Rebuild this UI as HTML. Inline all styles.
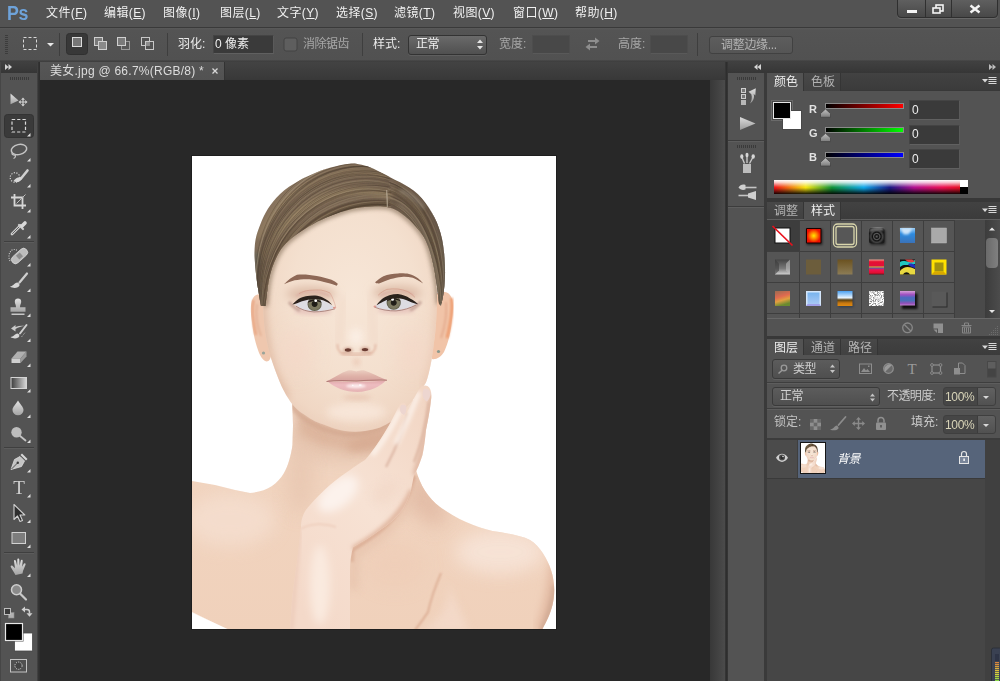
<!DOCTYPE html>
<html lang="zh-CN">
<head>
<meta charset="utf-8">
<title>美女.jpg @ 66.7%(RGB/8) * - Photoshop</title>
<style>
*{box-sizing:border-box;margin:0;padding:0}
html,body{width:1000px;height:681px;overflow:hidden;background:#535353}
body{position:relative;font-family:"Liberation Sans","Noto Sans CJK SC",sans-serif;font-size:12px;color:#e6e6e6;line-height:1}
.a{position:absolute}
.t{opacity:.99;position:absolute;white-space:nowrap;line-height:16px;height:16px;font-size:12px}
svg{position:absolute;overflow:visible}
u{text-decoration:underline;text-underline-offset:1px}
/* top bars */
#menubar{left:0;top:0;width:1000px;height:27px;background:#535353}
#menuline{left:0;top:27px;width:1000px;height:1px;background:#3a3a3a}
#optbar{left:0;top:28px;width:1000px;height:32px;background:linear-gradient(#5a5a5a,#545454 2px,#515151)}
#optline{left:0;top:60px;width:1000px;height:2px;background:linear-gradient(#4a4a4a,#3c3c3c)}
.menu{top:5px;color:#f2f2f2;letter-spacing:0.4px}
.dim{color:#a8a8a8}
.vsep{width:1px;top:33px;height:23px;background:#3e3e3e}
.inp{background:#3a3a3a;border:1px solid #444;border-bottom-color:#606060;border-right-color:#5a5a5a}
.inpd{background:#484848;border:1px solid #4d4d4d;border-bottom-color:#595959}
.dd{background:linear-gradient(#6a6a6a,#505050);border:1px solid #333;border-radius:3px;box-shadow:0 1px 0 rgba(255,255,255,.08)}
/* document */
#tabbar{left:40px;top:62px;width:685px;height:18px;background:linear-gradient(#434343,#383838)}
#canvas{left:40px;top:80px;width:670px;height:601px;background:#282828}
#vscroll{left:710px;top:80px;width:15px;height:601px;background:linear-gradient(90deg,#383838,#4b4b4b)}
#doctab{left:40px;top:62px;width:185px;height:18px;background:linear-gradient(#565656,#525252);border-right:1px solid #333}
/* left tools */
#tools{left:0;top:62px;width:38px;height:619px;background:#535353}
#toolshead{left:0;top:62px;width:38px;height:11px;background:linear-gradient(#404040,#363636)}
#toolsedge{left:37px;top:62px;width:3px;height:619px;background:linear-gradient(90deg,#474747,#333 50%,#2d2d2d)}
.tsep{left:4px;width:30px;height:1px;background:#3f3f3f;box-shadow:0 1px 0 #5c5c5c}
/* right */
#redge{left:725px;top:62px;width:3px;height:619px;background:linear-gradient(90deg,#3a3a3a,#2e2e2e 40%,#2e2e2e 70%,#3c3c3c)}
#rhead{left:728px;top:62px;width:272px;height:11px;background:linear-gradient(#404040,#363636)}
#iconcol{left:728px;top:73px;width:36px;height:608px;background:#535353}
#rgap{left:764px;top:73px;width:3px;height:608px;background:#3a3a3a}
#rpanel{left:767px;top:73px;width:233px;height:608px;background:#535353}
.ptabs{left:767px;width:233px;height:18px;background:linear-gradient(#424242,#3b3b3b);border-bottom:1px solid #383838}
.ptab{top:0;height:18px;background:linear-gradient(#484848,#414141);border-right:1px solid #353535;color:#b4b4b4}
.ptab.on{background:#535353;color:#f0f0f0;height:18px}
.ptab span{opacity:.99;position:absolute;left:2px;right:0;top:1px;text-align:center;line-height:16px;font-size:12px}
.hsep{left:767px;width:233px;height:1px;background:#3e3e3e}
</style>
</head>
<body>
<div class="a" id="menubar"></div>
<div class="a" id="menuline"></div>
<div class="a" id="optbar"></div>
<div class="a" id="optline"></div>
<div class="a" id="tabbar"></div>
<div class="a" id="canvas"></div>
<div class="a" id="vscroll"></div>
<div class="a" id="doctab"></div>
<div class="a" id="tools"></div>
<div class="a" id="toolshead"></div>
<div class="a" id="toolsedge"></div>
<div class="a" id="redge"></div>
<div class="a" id="rhead"></div>
<div class="a" id="iconcol"></div>
<div class="a" id="rgap"></div>
<div class="a" id="rpanel"></div>
<!-- ===== menu bar ===== -->
<div class="t" style="left:7px;top:3px;font-size:20px;line-height:20px;height:20px;font-weight:bold;color:#6fa4dc;letter-spacing:-0.5px;transform:scaleX(0.89);transform-origin:0 0" id="pslogo">Ps</div>
<div class="t menu" style="left:46px">文件(<u>F</u>)</div>
<div class="t menu" style="left:104px">编辑(<u>E</u>)</div>
<div class="t menu" style="left:163px">图像(<u>I</u>)</div>
<div class="t menu" style="left:220px">图层(<u>L</u>)</div>
<div class="t menu" style="left:277px">文字(<u>Y</u>)</div>
<div class="t menu" style="left:336px">选择(<u>S</u>)</div>
<div class="t menu" style="left:394px">滤镜(<u>T</u>)</div>
<div class="t menu" style="left:453px">视图(<u>V</u>)</div>
<div class="t menu" style="left:513px">窗口(<u>W</u>)</div>
<div class="t menu" style="left:575px">帮助(<u>H</u>)</div>
<!-- window buttons -->
<div class="a" style="left:897px;top:-3px;width:101px;height:21px;border:1px solid #2f2f2f;border-radius:0 0 4px 4px;background:linear-gradient(#626262,#484848);box-shadow:0 1px 0 rgba(255,255,255,.12)"></div>
<div class="a" style="left:925px;top:0;width:1px;height:17px;background:#303030"></div>
<div class="a" style="left:951px;top:0;width:1px;height:17px;background:#303030"></div>
<svg style="left:897px;top:0" width="101" height="18" viewBox="897 0 101 18">
  <rect x="907" y="10" width="10" height="3" fill="#f4f4f4"/>
  <rect x="936" y="5" width="7" height="6" fill="none" stroke="#f4f4f4" stroke-width="1.6"/>
  <rect x="933" y="8" width="7" height="5" fill="#555" stroke="#f4f4f4" stroke-width="1.6"/>
  <path d="M970.5 5.5 L979.5 12.5 M979.5 5.5 L970.5 12.5" stroke="#f4f4f4" stroke-width="2.4" fill="none"/>
</svg>
<!-- ===== options bar ===== -->
<svg style="left:0;top:28px" width="1000" height="32" viewBox="0 28 1000 32">
  <!-- grip -->
  <g fill="#3c3c3c"><rect x="5" y="35" width="3" height="1"/><rect x="5" y="37" width="3" height="1"/><rect x="5" y="39" width="3" height="1"/><rect x="5" y="41" width="3" height="1"/><rect x="5" y="43" width="3" height="1"/><rect x="5" y="45" width="3" height="1"/><rect x="5" y="47" width="3" height="1"/><rect x="5" y="49" width="3" height="1"/><rect x="5" y="51" width="3" height="1"/><rect x="5" y="53" width="3" height="1"/></g>
  <!-- marquee icon -->
  <rect x="23.5" y="37.5" width="13" height="12" fill="none" stroke="#d8d8d8" stroke-width="1" stroke-dasharray="3 2"/>
  <path d="M47 43 h7 l-3.5 3.5z" fill="#e8e8e8"/>
  <!-- selected mode button -->
  <rect x="66.5" y="33.500" width="21" height="21" rx="3" fill="#383838" stroke="#303030"/>
  <rect x="72.500" y="37.500" width="9" height="9" fill="#777" stroke="#dcdcdc"/>
  <!-- add -->
  <rect x="94.500" y="37.500" width="8" height="8" fill="#7a7a7a" stroke="#d0d0d0"/>
  <rect x="98.500" y="41.500" width="8" height="8" fill="#8a8a8a" stroke="#d0d0d0"/>
  <!-- subtract -->
  <rect x="121.500" y="41.500" width="8" height="8" fill="#585858" stroke="#9a9a9a"/>
  <rect x="117.500" y="37.500" width="8" height="8" fill="#7a7a7a" stroke="#d0d0d0"/>
  <!-- intersect -->
  <rect x="141.500" y="37.500" width="8" height="8" fill="none" stroke="#c8c8c8"/>
  <rect x="145.500" y="41.500" width="8" height="8" fill="none" stroke="#c8c8c8"/>
  <rect x="146" y="42" width="4" height="4" fill="#8c8c8c"/>
  <!-- checkbox -->
  <rect x="284" y="38" width="13" height="13" rx="2" fill="#5e5e5e" stroke="#434343"/>
  <!-- swap arrows -->
  <g fill="#8e8e8e"><path d="M588 40 h7 v-2.500 l4.500 3.500 l-4.500 3.500 v-2.500 h-7z"/><path d="M597 46 h-7 v-2.500 l-4.500 3.500 l4.500 3.500 v-2.500 h7z"/></g>
</svg>
<div class="a vsep" style="left:59px"></div>
<div class="a vsep" style="left:167px"></div>
<div class="a vsep" style="left:362px"></div>
<div class="a vsep" style="left:697px"></div>
<div class="t" style="left:178px;top:36px;color:#ededed">羽化:</div>
<div class="a inp" style="left:213px;top:35px;width:61px;height:19px"></div>
<div class="t" style="left:215px;top:36px;color:#f2f2f2">0 像素</div>
<div class="t dim" style="left:303px;top:36px;letter-spacing:-0.5px">消除锯齿</div>
<div class="t" style="left:373px;top:36px;color:#ededed">样式:</div>
<div class="a dd" style="left:408px;top:35px;width:79px;height:20px"></div>
<div class="t" style="left:416px;top:36px;color:#f2f2f2;letter-spacing:-0.5px">正常</div>
<div class="t dim" style="left:499px;top:36px">宽度:</div>
<div class="a inpd" style="left:532px;top:35px;width:38px;height:19px"></div>
<div class="t dim" style="left:618px;top:36px">高度:</div>
<div class="a inpd" style="left:650px;top:35px;width:38px;height:19px"></div>
<div class="a" style="left:709px;top:36px;width:84px;height:18px;border:1px solid #414141;border-radius:3px;background:linear-gradient(#5d5d5d,#555)"></div>
<div class="t" style="left:721px;top:37px;color:#b4b4b4;letter-spacing:-0.3px">调整边缘...</div>
<svg style="left:476px;top:38px" width="8" height="13" viewBox="476 38 8 13"><path d="M477 43 h6 l-3 -3.500z M477 46 h6 l-3 3.500z" fill="#e4e4e4"/></svg>
<!-- ===== document tab ===== -->
<div class="t" style="left:50px;top:63px;color:#dedede;letter-spacing:0.25px" id="doctitle">美女.jpg @ 66.7%(RGB/8) *</div>
<svg style="left:211px;top:67px" width="8" height="8" viewBox="0 0 8 8"><path d="M1.5 1.500 L6.500 6.500 M6.500 1.500 L1.500 6.500" stroke="#d8d8d8" stroke-width="1.300" fill="none"/></svg>
<!-- ===== left tool panel ===== -->
<div class="a tsep" style="top:241px"></div>
<div class="a tsep" style="top:447px"></div>
<div class="a tsep" style="top:552px"></div>
<svg style="left:0;top:0" width="40" height="681" viewBox="0 0 40 681">
  <defs>
    <linearGradient id="ig" x1="0" y1="0" x2="0" y2="1"><stop offset="0" stop-color="#e2e2e2"/><stop offset="1" stop-color="#a4a4a4"/></linearGradient>
    <linearGradient id="gg" x1="0" y1="0" x2="1" y2="0"><stop offset="0" stop-color="#3c3c3c"/><stop offset="1" stop-color="#d8d8d8"/></linearGradient>
    <path id="tri" d="M3.500 0 V3.500 H0z" fill="#dedede"/>
  </defs>
  <rect x="0" y="62" width="1" height="619" fill="#464646"/>
  <!-- collapse arrows -->
  <path d="M5 64 l3.500 3 l-3.500 3z M8.500 64 l3.500 3 l-3.500 3z" fill="#d4d4d4"/>
  <!-- grip -->
  <g fill="#3a3a3a"><rect x="10" y="77" width="1" height="3"/><rect x="12" y="77" width="1" height="3"/><rect x="14" y="77" width="1" height="3"/><rect x="16" y="77" width="1" height="3"/><rect x="18" y="77" width="1" height="3"/><rect x="20" y="77" width="1" height="3"/><rect x="22" y="77" width="1" height="3"/><rect x="24" y="77" width="1" height="3"/><rect x="26" y="77" width="1" height="3"/><rect x="28" y="77" width="1" height="3"/></g>
  <!-- move -->
  <path d="M10.500 93.500 V104.200 L18.500 100.500z" fill="url(#ig)"/>
  <path d="M23 97.500 l2 2.200 h-1.400 v1.700 h1.700 v-1.400 l2.200 2 l-2.200 2 v-1.400 h-1.700 v1.700 h1.400 l-2 2.200 l-2 -2.200 h1.400 v-1.700 h-1.700 v1.400 l-2.200 -2 l2.200 -2 v1.400 h1.700 v-1.700 h-1.400z" fill="#d2d2d2"/>
  <!-- marquee (selected) -->
  <rect x="4.500" y="114.500" width="29" height="23" rx="3" fill="#3a3a3a" stroke="#333"/>
  <rect x="12" y="119.500" width="13.500" height="12.500" fill="none" stroke="#dadada" stroke-width="1.200" stroke-dasharray="3.200 2"/>
  <use href="#tri" x="27" y="133"/>
  <!-- lasso -->
  <ellipse cx="19" cy="149.500" rx="7.800" ry="5" fill="none" stroke="#c4c4c4" stroke-width="1.500" transform="rotate(-12 19 149.500)"/>
  <path d="M12.500 152.500 c-1.500 1.500 1 3 2.500 2.500 c1.200 1.200 0 3 -1.500 3.500" fill="none" stroke="#c4c4c4" stroke-width="1.300"/>
  <use href="#tri" x="27" y="158"/>
  <!-- quick selection -->
  <circle cx="15" cy="177.500" r="4.800" fill="none" stroke="#d0d0d0" stroke-width="1.200" stroke-dasharray="1.200 1.400"/>
  <path d="M27.500 170.500 L21 178.500" stroke="#cfcfcf" stroke-width="2.600" stroke-linecap="round"/>
  <path d="M13.500 181 c2 -3.500 5.500 -4.500 8 -3.500 c1 2 -1.500 4.500 -4 4.500 c-1.500 0.300 -3 0 -4 -1z" fill="#d6d6d6"/>
  <use href="#tri" x="27" y="184"/>
  <!-- crop -->
  <path d="M14.500 194 V205.500 H26 M11 197.500 H22.500 V209" fill="none" stroke="#d6d6d6" stroke-width="1.800"/>
  <path d="M25.500 194.500 L16.500 203.500" stroke="#bdbdbd" stroke-width="1"/>
  <use href="#tri" x="27" y="209"/>
  <!-- eyedropper -->
  <path d="M12 234 L20.500 225.500" stroke="#d0d0d0" stroke-width="2.800" stroke-linecap="round"/>
  <path d="M12.500 233.500 L19.500 226.500" stroke="#555" stroke-width="0.900" stroke-linecap="round"/>
  <path d="M19 225 L23 229" stroke="#cdcdcd" stroke-width="2.200" stroke-linecap="round"/>
  <path d="M22 226 L25 223" stroke="#d8d8d8" stroke-width="3.600" stroke-linecap="round"/>
  <use href="#tri" x="27" y="235"/>
  <!-- healing brush -->
  <path d="M10 261 c-2 -4 -1 -9 2 -11 c2 -1 4 -0.500 5 0.500" fill="none" stroke="#d0d0d0" stroke-width="1.100" stroke-dasharray="1 1.300"/>
  <rect x="10" y="252" width="19" height="8" rx="4" fill="#bcbcbc" stroke="#dcdcdc" stroke-width="0.700" transform="rotate(-42 19.500 256)"/>
  <rect x="17" y="253.500" width="5" height="5" fill="#8c8c8c" transform="rotate(-42 19.500 256)"/>
  <use href="#tri" x="27" y="263"/>
  <!-- brush -->
  <path d="M27 273.500 L19.500 282.500" stroke="#cfcfcf" stroke-width="2.200" stroke-linecap="round"/>
  <path d="M10 286.500 c3 0 4 -3.500 7.500 -4 c1.500 0.500 2.200 1.500 2 3 c-1 2.500 -6 3.500 -9.500 1z" fill="#d6d6d6"/>
  <use href="#tri" x="27" y="288.500"/>
  <!-- stamp -->
  <path d="M18 298.500 a3.200 3.200 0 0 1 3.200 3.200 c0 2 -1.200 3 -1.200 5.500 h5.500 v4.500 h-15 v-4.500 h5.500 c0 -2.500 -1.200 -3.500 -1.200 -5.500 a3.200 3.200 0 0 1 3.200 -3.200z" fill="url(#ig)"/>
  <rect x="11.500" y="313.500" width="13" height="1.500" fill="#c8c8c8"/>
  <use href="#tri" x="27" y="313.500"/>
  <!-- history brush -->
  <path d="M26.500 325 L20 333.500" stroke="#cfcfcf" stroke-width="2" stroke-linecap="round"/>
  <path d="M10.500 337 c3 0 4 -3 7 -3.500 c1.500 0.500 2 1.500 1.800 2.800 c-1 2.300 -5.500 3 -8.800 0.700z" fill="#d6d6d6"/>
  <path d="M11 328.500 l4.500 -3.500 v2 c3 -1 6 -1.500 9 -1 c-3 0.300 -6 1.200 -9 3 v2.500z" fill="#cacaca"/>
  <path d="M21.500 337 l4 -5" stroke="#bcbcbc" stroke-width="1" stroke-dasharray="1 1.200"/>
  <use href="#tri" x="27" y="338.500"/>
  <!-- eraser -->
  <path d="M11.500 358.500 L17.500 351.500 H26.500 L20.500 358.500z" fill="#b0b0b0"/>
  <path d="M11.500 358.500 H20.500 V363 H11.500z" fill="#cfcfcf"/>
  <path d="M20.500 358.500 L26.500 351.500 V356.500 L20.500 363z" fill="#999"/>
  <use href="#tri" x="27" y="363.500"/>
  <!-- gradient -->
  <rect x="11" y="377.500" width="15.500" height="11" fill="url(#gg)" stroke="#d4d4d4" stroke-width="1"/>
  <use href="#tri" x="27" y="389"/>
  <!-- blur drop -->
  <path d="M18 400.500 c2 3.500 5.500 6.500 5.500 9.500 a5.500 5.300 0 0 1 -11 0 c0 -3 3.500 -6 5.500 -9.500z" fill="url(#ig)"/>
  <use href="#tri" x="27" y="414.500"/>
  <!-- dodge -->
  <path d="M19.500 435.500 L25.500 440.500" stroke="#c4c4c4" stroke-width="1.800" stroke-linecap="round"/>
  <circle cx="16.500" cy="432.200" r="5.200" fill="#bdbdbd"/>
  <use href="#tri" x="27" y="439.500"/>
  <!-- pen -->
  <path d="M11 469.500 L14.500 459.500 L20 456.500 L24.500 461 L21.500 466.500z" fill="#c4c4c4" stroke="#dedede" stroke-width="0.800"/>
  <path d="M11.500 469 L17.500 463" stroke="#444" stroke-width="0.900"/>
  <circle cx="17.800" cy="462.700" r="1.200" fill="#3c3c3c"/>
  <path d="M20.500 455 L26 460.500 L27.500 459 L22 453.500z" fill="#d8d8d8"/>
  <use href="#tri" x="27" y="469"/>
  <use href="#tri" x="27" y="494"/>
  <!-- rectangle shape -->
  <rect x="12" y="532.500" width="13.500" height="11" fill="#7d7d7d" stroke="#d2d2d2" stroke-width="1"/>
  <use href="#tri" x="27" y="544.500"/>
  <!-- path select -->
  <path d="M14 504.500 V519.500 L17.500 516 L20 521.500 L22.500 520.500 L20 515 H24.800z" fill="#2e2e2e" stroke="#d0d0d0" stroke-width="1.100" stroke-linejoin="round"/>
  <use href="#tri" x="27" y="519.500"/>
  <!-- hand -->
  <path d="M15.500 575 L11 567.500 c-1 -1.500 0.500 -2.500 1.700 -1.500 l2.300 2.200 l-1 -7 c-0.200 -1.500 1.500 -1.800 1.900 -0.400 l1.300 5 l0.100 -6.200 c0 -1.500 1.900 -1.500 2 0 l0.300 6.200 l1.200 -5.200 c0.300 -1.400 2 -1 1.900 0.400 l-0.600 5.800 l1.700 -3 c0.700 -1.200 2.200 -0.400 1.700 0.900 l-2.500 6.300 l-0.500 2.500z" fill="url(#ig)"/>
  <use href="#tri" x="27" y="573.500"/>
  <!-- zoom -->
  <path d="M20 593.500 L26 599.500" stroke="#c8c8c8" stroke-width="2.200" stroke-linecap="round"/>
  <circle cx="16.500" cy="589.700" r="5" fill="#8a8a8a" stroke="#cdcdcd" stroke-width="1.500"/>
  <!-- default colors / swap -->
  <rect x="8.500" y="612.500" width="5.500" height="5.500" fill="#b0b0b0" stroke="#8c8c8c" stroke-width="0.600"/>
  <rect x="4.500" y="608.500" width="6" height="6" fill="#3a3a3a" stroke="#bdbdbd" stroke-width="1"/>
  <path d="M24.500 609.500 h2.500 a2.500 2.500 0 0 1 2.500 2.500 v1.500" fill="none" stroke="#cfcfcf" stroke-width="1.500"/>
  <path d="M21.500 609.500 l3.500 -3 v6z M29.500 616.800 l-3 -3.500 h6z" fill="#cfcfcf"/>
  <!-- fg / bg -->
  <rect x="14.500" y="633" width="18" height="18" fill="#fff" stroke="#4a4a4a" stroke-width="0.800"/>
  <rect x="4.500" y="622.500" width="19" height="19" fill="#4a4a4a"/>
  <rect x="5.500" y="623.500" width="17" height="17" fill="#000" stroke="#e8e8e8" stroke-width="1.200"/>
  <!-- quick mask -->
  <rect x="10.500" y="659.500" width="16" height="12.500" fill="#505050" stroke="#c4c4c4" stroke-width="1"/>
  <circle cx="18.500" cy="665.700" r="3.600" fill="#444" stroke="#d6d6d6" stroke-width="1" stroke-dasharray="1.200 1.100"/>
</svg>
<div class="t" style="left:12px;top:478px;width:14px;text-align:center;font-family:'Liberation Serif',serif;font-size:19px;line-height:19px;height:19px;color:#d2d2d2">T</div>
<!-- ===== document canvas: portrait photo ===== -->
<div class="a" style="left:191px;top:155px;width:366px;height:475px;background:#1e1e1e"></div>
<svg style="left:192px;top:156px;overflow:hidden" width="364" height="473" viewBox="192 156 364 473" id="photo">
  <defs>
    <filter id="f05" x="-30%" y="-30%" width="160%" height="160%"><feGaussianBlur stdDeviation="0.500"/></filter>
    <filter id="f07" x="-10%" y="-10%" width="120%" height="120%"><feGaussianBlur stdDeviation="0.700"/></filter>
    <filter id="f1" x="-30%" y="-30%" width="160%" height="160%"><feGaussianBlur stdDeviation="1"/></filter>
    <filter id="f2" x="-30%" y="-30%" width="160%" height="160%"><feGaussianBlur stdDeviation="2.200"/></filter>
    <filter id="f4" x="-40%" y="-40%" width="180%" height="180%"><feGaussianBlur stdDeviation="4.500"/></filter>
    <filter id="f8" x="-50%" y="-50%" width="200%" height="200%"><feGaussianBlur stdDeviation="9"/></filter>
    <linearGradient id="bodyg" x1="0" y1="0" x2="0" y2="1"><stop offset="0" stop-color="#f3dccb"/><stop offset="0.350" stop-color="#f1d4bf"/><stop offset="1" stop-color="#f0d1bb"/></linearGradient>
    <radialGradient id="faceg" cx="0.520" cy="0.400" r="0.650"><stop offset="0" stop-color="#f7e6d7"/><stop offset="0.550" stop-color="#f4e0cf"/><stop offset="0.850" stop-color="#f0d7c4"/><stop offset="1" stop-color="#eaccb8"/></radialGradient>
    <linearGradient id="hairg" x1="0.150" y1="0.100" x2="0.900" y2="0.800"><stop offset="0" stop-color="#8c7761"/><stop offset="0.350" stop-color="#7a6754"/><stop offset="0.650" stop-color="#6a5848"/><stop offset="1" stop-color="#756859"/></linearGradient>
    <linearGradient id="handg" x1="0.900" y1="0" x2="0.200" y2="1"><stop offset="0" stop-color="#f2d6c4"/><stop offset="0.500" stop-color="#f7e2d4"/><stop offset="1" stop-color="#f4d9c9"/></linearGradient>
    <radialGradient id="irisg"><stop offset="0" stop-color="#1c1a16"/><stop offset="0.360" stop-color="#24211a"/><stop offset="0.480" stop-color="#7e7a60"/><stop offset="0.800" stop-color="#7a7760"/><stop offset="1" stop-color="#55533f"/></radialGradient>
    <linearGradient id="lipU" x1="0" y1="0" x2="0" y2="1"><stop offset="0" stop-color="#ebcdc0"/><stop offset="0.500" stop-color="#dfb2a8"/><stop offset="1" stop-color="#d4a09c"/></linearGradient>
    <linearGradient id="lipL" x1="0" y1="0" x2="0" y2="1"><stop offset="0" stop-color="#dfa6a8"/><stop offset="0.400" stop-color="#edbcc0"/><stop offset="1" stop-color="#e6b4b4"/></linearGradient>
    <clipPath id="cbody"><path id="pbody" d="M192 481 L215 485 L235 490 L250 493 C258 492.500 266 490 272 486 C277 482.500 281 478 284 473 C288 466 291 456 292.500 445 L293 425 L292 400 L430 400 L416 470 C420 485 428 498 440 507 C455 518 475 527 492.500 531 C505 533 520 535 530 540 C540 546 548 560 551 570 C555 582 555 595 552.500 605 C550 615 546 622 542.500 629 L227.500 629 L192 612.500 Z"/></clipPath>
    <clipPath id="cface"><path id="pface" d="M265 290 C263 300 263 310 263.750 317.500 C264 328 266 338 268 347 C270 356 275 370 280 382.500 C284 392 288 398 291 402.500 C296 409 300 412 305 415 C312 420 318 423 325 425 C332 428 338 430 345 431 C352 432 358 432 365 431 C370 430 376 429 380 427.500 C388 424 394 420 400 414 C410 404 420 392 426 382.500 C430 372 433 352 434 342.500 C436 330 437 310 437 295 C437 270 430 230 400 205 L330 205 C290 225 268 260 265 290 Z"/></clipPath>
    <clipPath id="chair"><path id="phair" d="M261 306 C260.5 303.1 258.9 294.4 258 288.6 C257.1 282.8 256.3 276.6 255.7 271.2 C255.2 265.8 254.8 260.5 254.6 256.2 C254.5 252 254.5 248.7 254.8 245.7 C255 242.6 255.4 240.4 255.9 237.9 C256.4 235.4 257.2 233.1 258 230.7 C258.8 228.3 259.7 225.8 260.7 223.4 C261.6 220.9 262.7 218.5 263.9 216 C265.1 213.6 266.3 211.1 267.9 208.7 C269.4 206.3 271.1 203.8 273.2 201.4 C275.2 198.9 277.5 196.5 280.1 194 C282.8 191.6 285.7 189.2 289 186.8 C292.4 184.5 296.1 182.1 300.2 179.9 C304.2 177.7 308.9 175.6 313.5 173.7 C318 171.8 323.1 170 327.5 168.6 C332 167.1 336.3 166 339.9 165.2 C343.6 164.4 346.6 163.9 349.5 163.7 C352.4 163.5 354.7 163.6 357.5 163.9 C360.3 164.3 363.1 165 366.2 166 C369.2 167 372.7 168.4 375.9 169.9 C379.2 171.4 382.5 173.3 385.8 175 C389 176.6 392.1 178.3 395.3 180 C398.5 181.6 401.8 183.1 404.9 184.9 C408 186.7 411.1 188.5 413.9 190.7 C416.7 192.9 419.3 195.4 421.8 198.2 C424.3 201 426.6 204.2 428.7 207.5 C430.8 210.7 432.8 214.1 434.5 217.5 C436.2 220.9 437.6 224.3 438.9 227.9 C440.1 231.4 441.1 235 442 238.9 C442.8 242.7 443.4 246.9 443.9 251.2 C444.4 255.6 444.8 260.4 444.9 265.1 C445.1 269.8 445.1 274.8 444.9 279.5 C444.7 284.2 444.1 288.8 443.5 293.2 C442.9 297.6 441.4 303.9 441 306 L439 304 C438.6 300.9 437.7 291.5 436.9 285.5 C436 279.5 435.1 273.3 434 267.8 C432.9 262.2 431.5 256.6 430.2 252.2 C428.9 247.9 427.6 244.5 426.2 241.4 C424.8 238.3 423.4 236.2 421.6 233.7 C419.8 231.2 417.8 228.8 415.7 226.4 C413.5 224 411.1 221.5 408.7 219.3 C406.3 217.2 403.8 215.1 401.4 213.4 C399 211.7 396.6 210.3 394.2 209.2 C391.8 208.1 389.8 207.4 387 206.9 C384.3 206.4 381.4 206.2 377.7 206.2 C374 206.2 369 206.4 364.7 206.9 C360.4 207.3 355.8 208 351.9 208.9 C347.9 209.8 344.9 210.7 340.9 212 C336.9 213.3 332.5 214.9 328 216.8 C323.6 218.7 318.5 221.1 314.1 223.4 C309.8 225.7 305.8 228.3 302 230.8 C298.3 233.2 294.9 235.5 291.8 238 C288.6 240.6 285.8 243.1 283.3 246.2 C280.8 249.2 278.7 252.7 276.8 256.4 C274.9 260 273.3 264.1 272 268 C270.7 271.9 269.7 275.9 268.9 280 C268 284.1 267.6 288.2 267 292.5 C266.4 296.8 265.8 303.8 265.5 306 Z"/></clipPath>
    <clipPath id="chand"><path id="phand" d="M427.500 386 C431 388 432 394 431 400 C430 410 428 420 426 430 C425 440 424 448 422.500 455 C420 463 417 470 414 475 C413 480 412 485 411 490 C409 497 406 504 402.500 510 C396 518 388 525 380 530 C372 536 362 542 353 547 C351 555 350 562 350 570 L350 629 L290 629 L292.500 595 L297.500 557.500 L301 527.500 C301 518 304 511 310 505 C316 498 323 491 330 485 C337 479 344 474 350 470 C355 466 360 463 365 460 C372 452 379 442 385 432 C390 424 395 414 399 406 C401 402 405 402 406 405 C407 408 406 412 405 416 C409 408 414 398 418 391 C421 386 424 384.500 427.500 386 Z"/></clipPath>
    <g id="portrait">
      <rect x="192" y="156" width="364" height="473" fill="#fff"/>
      <!-- body -->
      <use href="#pbody" fill="url(#bodyg)"/>
      <g clip-path="url(#cbody)">
        <ellipse cx="345" cy="436" rx="58" ry="26" fill="#e4c2ac" filter="url(#f8)" opacity="0.900"/><path d="M296 410 C310 428 335 438 360 438 C378 437 392 430 402 420 L398 445 C380 452 330 452 300 436Z" fill="#dbb29a" filter="url(#f4)" opacity="0.850"/><path d="M291 404 C300 418 318 430 345 434 C362 435 380 431 398 418" stroke="#d3a78f" stroke-width="6" fill="none" filter="url(#f2)" opacity="0.900"/>
        <ellipse cx="300" cy="475" rx="14" ry="40" fill="#e6c4ae" filter="url(#f8)" opacity="0.700"/>
        <ellipse cx="425" cy="500" rx="16" ry="30" fill="#e0b8a2" filter="url(#f8)" opacity="0.800" transform="rotate(-35 425 500)"/><ellipse cx="372" cy="440" rx="26" ry="9" fill="#d6a990" filter="url(#f4)" opacity="0.700" transform="rotate(-20 372 440)"/>
        <ellipse cx="500" cy="552" rx="45" ry="22" fill="#f7e4d8" filter="url(#f8)" opacity="0.900"/>
        <ellipse cx="230" cy="520" rx="45" ry="26" fill="#f5dfd0" filter="url(#f8)" opacity="0.800"/>
        <path d="M556 560 C552 590 548 610 540 632" stroke="#e2b9a2" stroke-width="10" fill="none" filter="url(#f4)"/><path d="M555 585 C553 602 549 616 542 631" stroke="#cfa892" stroke-width="5" fill="none" filter="url(#f2)"/>
        <path d="M441 573 C436 585 431 598 428 612 C424 618 420 624 415 630" stroke="#d9a98f" stroke-width="1.600" fill="none" filter="url(#f1)"/>
        <path d="M445 578 C455 600 440 620 420 632 L470 632 Z" fill="#f4dccd" filter="url(#f4)" opacity="0.700"/>
        <ellipse cx="395" cy="565" rx="30" ry="22" fill="#eecbb5" filter="url(#f8)" opacity="0.500"/>
        <path d="M192 612 L228 630 L192 640Z" fill="#fff"/>
      </g>
      <!-- ears -->
      <path d="M266 296 C262 293 256 293 253 298 C250 304 250.500 312 252 322 C253 332 255 342 258 350 C260 356 263 360.500 266.500 361.500 C269.500 361.500 271 358 271.500 353 L272 340 Z" fill="#efc7ae"/><path d="M257 304 C255.500 314 257 326 261 336" stroke="#e2ac90" stroke-width="1.500" fill="none" filter="url(#f1)"/>
      <path d="M253.500 300 C251.500 310 253 322 256 335" stroke="#e8a27e" stroke-width="2.200" fill="none" filter="url(#f1)"/>
      <path d="M436 294 C440 291 447 291 450 295 C454 300 453.500 310 452 320 C451 332 448 344 444 352 C441 357 436 360 432 359 L430 330 Z" fill="#f1c4a8"/><path d="M446 302 C447 312 445 326 441 338" stroke="#e2a688" stroke-width="1.500" fill="none" filter="url(#f1)"/>
      <path d="M451.500 298 C453 308 451 322 447 338" stroke="#ee9a6c" stroke-width="2.600" fill="none" filter="url(#f1)"/>
      <circle cx="263.500" cy="353" r="1.600" fill="#9aa49a"/><circle cx="438.500" cy="351.500" r="1.600" fill="#8a988c"/>
      <!-- face -->
      <use href="#pface" fill="url(#faceg)"/>
      <g clip-path="url(#cface)">
        <path d="M261 290 C261 330 268 368 286 398" stroke="#dfb8a0" stroke-width="8" fill="none" filter="url(#f4)"/><path d="M288 402 C300 420 330 434 358 435 C375 434 390 428 400 418" stroke="#ecd0bd" stroke-width="3" fill="none" filter="url(#f2)"/>
        <path d="M439 290 C439 330 435 360 425 388" stroke="#e9c6b0" stroke-width="6" fill="none" filter="url(#f4)"/>
        <ellipse cx="297" cy="352" rx="18" ry="24" fill="#f4d8c8" filter="url(#f8)" opacity="0.700"/>
        <ellipse cx="412" cy="352" rx="16" ry="24" fill="#f4d8c8" filter="url(#f8)" opacity="0.700"/>
        <ellipse cx="356" cy="412" rx="30" ry="9" fill="#f9e9dd" filter="url(#f4)" opacity="0.800"/>
        <!-- eye shadows -->
        <ellipse cx="311" cy="294" rx="25" ry="8" fill="#dfbfab" filter="url(#f4)"/>
        <ellipse cx="397" cy="293" rx="25" ry="8" fill="#dfbfab" filter="url(#f4)"/>
        <path d="M296 296 C304 290.500 318 290 330 296" stroke="#d9a9a0" stroke-width="1.200" fill="none" filter="url(#f1)"/>
        <path d="M380 296 C390 290 404 289.500 414 295" stroke="#d9a9a0" stroke-width="1.200" fill="none" filter="url(#f1)"/>
        <ellipse cx="313" cy="311" rx="19" ry="3.500" fill="#e6c4bc" filter="url(#f2)"/>
        <ellipse cx="396" cy="310" rx="19" ry="3.500" fill="#e6c4bc" filter="url(#f2)"/>
        <!-- nose -->
        <path d="M343 296 C341 318 340 332 337.500 345" stroke="#f0d8c7" stroke-width="5" fill="none" filter="url(#f4)"/>
        <path d="M370 296 C372 318 373 332 375.500 345" stroke="#f0d8c7" stroke-width="5" fill="none" filter="url(#f4)"/>
        <ellipse cx="356" cy="337" rx="7" ry="9" fill="#fcf1e8" filter="url(#f4)" opacity="0.900"/>
        <path d="M337.500 344 C337 350 340 353.500 345 353.500" stroke="#e2b8a4" stroke-width="1.800" fill="none" filter="url(#f1)"/>
        <path d="M375.500 344 C376 350 373 353.500 368 353.500" stroke="#e2b8a4" stroke-width="1.800" fill="none" filter="url(#f1)"/>
        <path d="M342 353 C348 355.500 364 355.500 371 353" stroke="#dcae9a" stroke-width="3" fill="none" filter="url(#f2)"/>
        <ellipse cx="348" cy="350" rx="5" ry="3" fill="#c99a88" filter="url(#f1)" opacity="0.600"/><ellipse cx="348" cy="350" rx="3.200" ry="1.700" fill="#6a3c32" filter="url(#f07)"/>
        <ellipse cx="365" cy="349.600" rx="5" ry="3" fill="#c99a88" filter="url(#f1)" opacity="0.600"/><ellipse cx="365" cy="349.600" rx="3.200" ry="1.700" fill="#6a3c32" filter="url(#f07)"/>
        <ellipse cx="356.500" cy="362" rx="4" ry="4" fill="#ecccb9" filter="url(#f2)" opacity="0.800"/>
        <!-- lips -->
        <g filter="url(#f05)">
        <path d="M326.500 381.300 C334 378 341 372.500 348 370.500 C351 370 354 371 356.300 371.500 C358.500 371 361.500 370 364.500 370.500 C371 372.500 380 377.500 387 380 C375 381.500 340 382 326.500 381.300Z" fill="url(#lipU)"/>
        <path d="M327.500 381.300 C340 382.500 375 382 386 380.200 C381 386 370 391.500 357.500 392 C345 392 334 387.500 327.500 381.300Z" fill="url(#lipL)"/>
        </g>
        <path d="M326.500 381.500 C333 380.500 345 380.300 356.500 381 C368 380.200 380 379.600 387 380.200" stroke="#b07874" stroke-width="1.100" fill="none" filter="url(#f05)"/>
        <ellipse cx="356" cy="386" rx="10" ry="2.200" fill="#fbe9ea" filter="url(#f1)"/>
        <rect x="359" y="384.500" width="2.500" height="1.200" fill="#fff"/><rect x="352" y="384.800" width="1.500" height="1" fill="#fff"/>
        <ellipse cx="357" cy="397.500" rx="14" ry="3" fill="#e9c7b4" filter="url(#f2)" opacity="0.800"/>
      </g>
      <g clip-path="url(#cface)"><path d="M439 304 C438.6 300.9 437.7 291.5 436.9 285.5 C436 279.5 435.1 273.3 434 267.8 C432.9 262.2 431.5 256.6 430.2 252.2 C428.9 247.9 427.6 244.5 426.2 241.4 C424.8 238.3 423.4 236.2 421.6 233.7 C419.8 231.2 417.8 228.8 415.7 226.4 C413.5 224 411.1 221.5 408.7 219.3 C406.3 217.2 403.8 215.1 401.4 213.4 C399 211.7 396.6 210.3 394.2 209.2 C391.8 208.1 389.8 207.4 387 206.9 C384.3 206.4 381.4 206.2 377.7 206.2 C374 206.2 369 206.4 364.7 206.9 C360.4 207.3 355.8 208 351.9 208.9 C347.9 209.8 344.9 210.7 340.9 212 C336.9 213.3 332.5 214.9 328 216.8 C323.6 218.7 318.5 221.1 314.1 223.4 C309.8 225.7 305.8 228.3 302 230.8 C298.3 233.2 294.9 235.5 291.8 238 C288.6 240.6 285.8 243.1 283.3 246.2 C280.8 249.2 278.7 252.7 276.8 256.4 C274.9 260 273.3 264.1 272 268 C270.7 271.9 269.7 275.9 268.9 280 C268 284.1 267.6 288.2 267 292.5 C266.4 296.8 265.8 303.8 265.5 306" stroke="#8a7660" stroke-width="5" fill="none" filter="url(#f2)" opacity="0.750"/></g>
      <!-- brows -->
      <g filter="url(#f07)">
      <path d="M284 284.200 C288 280 292.500 276.600 297 274.800 C303 274 310 274.800 316.800 276 C322 277 327 278.300 331.500 279.800 C334 281 336 282.300 337.600 283.600 C337.800 284.500 337.300 285.300 336.600 285.800 C332 284 328 282.800 324 282 C319 280.600 314 279.600 309.400 279.200 C304 279 299 279.400 294.700 280.300 C291 281.300 287.500 282.800 284 284.200Z" fill="#8e6856"/>
      <path d="M375 282.300 C377.500 280 380.500 277.800 383.400 276.200 C388 274.300 393 273.600 398 273.400 C402 273.200 406 273.400 409 273.900 C412.500 274.800 415.500 276.300 418 278.300 C420 280 421.700 281.700 423.200 283.600 C420 281.500 416.500 279.300 412.800 277.800 C409 276.900 405.500 276.700 401.800 276.900 C398 277.300 394 278.100 390.700 279.100 C387 280.300 383.500 281.800 379.700 283.300 C378 283.800 376 283.300 375 282.300Z" fill="#8e6856"/>
      </g>
      <!-- eyes -->
      <g id="eyeL">
        <path d="M289 302 C292 306 296 309 300 310.500" stroke="#b8948a" stroke-width="3" fill="none" filter="url(#f1)" opacity="0.700"/>
        <path d="M295 304.500 C300 300 306 297.800 313 297.800 C321 298.300 328 302 335 308 C328 310.300 320 311.600 313 311.400 C305 310.800 299 308.300 295 304.500Z" fill="#dddce2" filter="url(#f05)"/>
        <circle cx="314.600" cy="304" r="7.100" fill="url(#irisg)"/>
        <path d="M307.500 303 C309 298 320 298 321.700 303 C318 300.500 311 300.500 307.500 303Z" fill="#241c18" filter="url(#f05)"/>
        <circle cx="315.700" cy="300.700" r="1.400" fill="#fff"/>
        <path d="M292.300 304.500 C294 302.500 296 300.700 298.400 298.900 C301 297.400 303.500 296.600 305.700 296.200 C309 295.600 312 295.400 315.300 295.500 C318 295.800 320.500 296.500 322.600 297.400 C324.500 298.300 326.300 299.300 327.800 300.400 C329.500 301.800 331 303.300 332 305 C329 303 326 301.300 323 300.200 C320 299.400 317 299.100 314 299.100 C310 299.300 306 300 302 301.200 C298.500 302.500 295.500 304 292.300 304.500Z" fill="#2b211e" filter="url(#f05)"/>
        <path d="M299 293.700 C302 291.800 305.500 290.700 309.400 290.300 C313.500 290 317.500 289.900 321.200 290.100 C324.500 290.700 327.500 291.700 330 293" stroke="#d39a88" stroke-width="0.800" fill="none" filter="url(#f05)" opacity="0.850"/>
        <path d="M330 293 C332 296 334.500 302 335.800 307.500" stroke="#d8a090" stroke-width="0.800" fill="none" filter="url(#f05)" opacity="0.700"/>
        <path d="M296 306.200 C301 309.600 307 311.600 314 311.900 C321 311.900 328 310.800 335 308.800" stroke="#a8827c" stroke-width="0.900" fill="none" filter="url(#f05)"/>
        <ellipse cx="334.400" cy="307.700" rx="1.500" ry="1" fill="#dc9a90" filter="url(#f05)"/>
      </g>
      <g id="eyeR">
        <path d="M421 301.500 C418 305.500 414 308.500 410 310" stroke="#b8948a" stroke-width="3" fill="none" filter="url(#f1)" opacity="0.700"/>
        <path d="M374.500 306.800 C381 301.500 388 297.300 396 296.800 C404 297 411 299.500 416.500 304 C411 307.300 404 309.800 396 310.300 C388 310.500 381 309.200 374.500 306.800Z" fill="#dddce2" filter="url(#f05)"/>
        <circle cx="393.700" cy="302.700" r="7.100" fill="url(#irisg)"/>
        <path d="M386.600 301.500 C388 296.800 399 296.800 400.800 301.500 C397 299.200 390 299.200 386.600 301.500Z" fill="#241c18" filter="url(#f05)"/>
        <circle cx="392.600" cy="299.400" r="1.400" fill="#fff"/>
        <path d="M376.500 305.200 C378 302.800 380 300.700 382 298.900 C384.500 297.200 387 296 389.300 295.200 C392 294.400 395 294 398 294 C400.500 294.300 403 295 405.400 296 C408 297.100 410 298.300 412 299.600 C414.500 301.200 416.500 302.700 418.200 304.200 C415 303.800 412 302.500 409 301.300 C405 299.500 401 298.300 397 298 C392 298.200 387 299.700 383 301.800 C380.500 303 378.500 304.300 376.500 305.200Z" fill="#2b211e" filter="url(#f05)"/>
        <path d="M378.200 295.200 C381 292.500 384 290.500 387 289.400 C390.500 288.800 394 288.700 398 289 C401.500 289.500 404.500 290.300 407.600 291.500 C410.500 293 413 295 415 297.400" stroke="#d39a88" stroke-width="0.800" fill="none" filter="url(#f05)" opacity="0.850"/>
        <path d="M374.500 307.200 C381 309.700 389 311.100 396 310.900 C403 310.400 410 308.200 416.500 304.800" stroke="#a8827c" stroke-width="0.900" fill="none" filter="url(#f05)"/>
        <ellipse cx="375" cy="306.600" rx="1.500" ry="1" fill="#dc9a90" filter="url(#f05)"/>
      </g>
      <!-- hair -->
      <g filter="url(#f07)">
      <use href="#phair" fill="url(#hairg)"/>
      <g clip-path="url(#chair)">
        <path d="M390 205 C350 200 300 218 277 255 C270 270 266 290 264 306" stroke="#6a5640" stroke-width="5" fill="none" filter="url(#f2)" opacity="0.850"/>
        <path d="M392 196 C340 180 285 205 262 260" stroke="#a38d6b" stroke-width="7" fill="none" filter="url(#f2)" opacity="0.700"/>
        <path d="M386 176 C340 163 285 183 258 238" stroke="#9a8464" stroke-width="5" fill="none" filter="url(#f2)" opacity="0.700"/>
        <path d="M395 188 C420 200 440 240 443 300" stroke="#685642" stroke-width="8" fill="none" filter="url(#f2)" opacity="0.850"/>
        <path d="M398 205 C420 220 435 255 439 300" stroke="#94846e" stroke-width="4" fill="none" filter="url(#f2)" opacity="0.800"/>
        <path d="M257 252 C255.500 275 258 295 262 308" stroke="#6b665a" stroke-width="7" fill="none" filter="url(#f2)" opacity="0.900"/>
        <path d="M446 262 C446 280 445 292 442 306" stroke="#77736a" stroke-width="5" fill="none" filter="url(#f2)" opacity="0.800"/>
        <g fill="none">
<path d="M389 166.8 C326.3 141.5 240.9 195 257.6 306.6" stroke="#4a3c2e" stroke-width="1" opacity="0.33"/>
<path d="M388.7 167.5 C329.2 143.3 242.5 196 258.1 306.6" stroke="#5e4e3e" stroke-width="0.6" opacity="0.55"/>
<path d="M388.9 166.7 C327.4 144.7 241.9 198.1 258.4 307.6" stroke="#b4a48a" stroke-width="1.2" opacity="0.45"/>
<path d="M390 169 C329.1 145.3 245.2 198.5 257.5 307" stroke="#5e4e3e" stroke-width="0.7" opacity="0.36"/>
<path d="M389.5 169.5 C328.7 145.2 244.7 198.6 257.9 309.3" stroke="#4a3c2e" stroke-width="0.6" opacity="0.48"/>
<path d="M390.2 171.8 C328.1 148.6 245.9 200.8 258.5 309" stroke="#4a3c2e" stroke-width="1" opacity="0.48"/>
<path d="M390.6 171.3 C330.2 149.4 245.2 200.4 259.2 306.6" stroke="#645444" stroke-width="0.9" opacity="0.46"/>
<path d="M389.2 171.4 C329.7 149.9 248.3 201.9 257.9 307.7" stroke="#4a3c2e" stroke-width="1.4" opacity="0.54"/>
<path d="M389.3 172.8 C328.9 153 249.5 201.9 258.2 307.2" stroke="#5e4e3e" stroke-width="0.6" opacity="0.54"/>
<path d="M389.3 172.3 C329.5 152.6 247.8 202.1 260.3 309.4" stroke="#96846c" stroke-width="1.2" opacity="0.27"/>
<path d="M390.8 175.8 C330.6 154 249.4 203.3 260 306.7" stroke="#5e4e3e" stroke-width="1.5" opacity="0.40"/>
<path d="M390.3 173.7 C330 154.7 251.2 205 258.3 307.1" stroke="#5e4e3e" stroke-width="0.7" opacity="0.34"/>
<path d="M389.6 174.7 C331.1 157.6 250.8 205.6 258.6 306.8" stroke="#4e4032" stroke-width="1.3" opacity="0.42"/>
<path d="M390 176 C331.6 157.3 252.5 207.9 260.8 307.4" stroke="#96846c" stroke-width="1.4" opacity="0.49"/>
<path d="M389.6 176.4 C331.2 158.5 253.2 206.6 259.3 308.9" stroke="#584838" stroke-width="1.3" opacity="0.54"/>
<path d="M389.2 178.6 C330.3 158.8 252.1 207.6 259.7 308.6" stroke="#584838" stroke-width="1" opacity="0.58"/>
<path d="M391.4 179.1 C330.1 160.9 253.6 208.4 261 309.2" stroke="#4e4032" stroke-width="1" opacity="0.48"/>
<path d="M388.8 180.7 C332.4 163.6 255.9 209.8 259.8 308.9" stroke="#4e4032" stroke-width="0.7" opacity="0.58"/>
<path d="M389.9 181.7 C330.1 162.9 257.4 209.2 261.3 307.9" stroke="#96846c" stroke-width="0.7" opacity="0.54"/>
<path d="M390.5 181.5 C331.7 164.3 255.5 213 261.7 308.1" stroke="#645444" stroke-width="1" opacity="0.56"/>
<path d="M389.1 181.9 C331.1 165.7 257.9 211.5 261.1 306.9" stroke="#584838" stroke-width="1.4" opacity="0.48"/>
<path d="M390.1 184.4 C333.1 166.6 257.3 213 262.7 308.8" stroke="#88765e" stroke-width="0.6" opacity="0.53"/>
<path d="M389.9 184.3 C332.2 167.6 258.7 213.4 262.5 306.8" stroke="#b4a48a" stroke-width="0.7" opacity="0.32"/>
<path d="M388.8 184.2 C330.8 170.3 258 213.4 263.2 308.3" stroke="#584838" stroke-width="1.2" opacity="0.41"/>
<path d="M389.9 186.9 C333.1 172.1 261.9 214.4 262.2 309.3" stroke="#645444" stroke-width="0.7" opacity="0.29"/>
<path d="M388.7 185.5 C331.4 172.6 262.1 217 261.2 308.6" stroke="#584838" stroke-width="0.7" opacity="0.56"/>
<path d="M389.2 188.8 C332.7 173.9 263.9 218 261.5 307.8" stroke="#9e8c72" stroke-width="1" opacity="0.40"/>
<path d="M388.8 187.4 C332.6 174.3 263.4 216.9 262.6 307.4" stroke="#5e4e3e" stroke-width="0.7" opacity="0.57"/>
<path d="M391.1 187.2 C332.6 176.7 262.5 218.7 263.7 309" stroke="#4a3c2e" stroke-width="1" opacity="0.44"/>
<path d="M390 189 C332.8 178 263.5 220.1 262.3 306.6" stroke="#5e4e3e" stroke-width="1.3" opacity="0.28"/>
<path d="M388.7 191.7 C333.6 178.2 265.7 221.3 262.5 306.9" stroke="#9e8c72" stroke-width="1.2" opacity="0.58"/>
<path d="M389.3 190.5 C335.3 180.5 266.5 220 263.2 308.5" stroke="#4a3c2e" stroke-width="0.9" opacity="0.26"/>
<path d="M388.5 192.4 C334.2 179.5 266.6 222.4 262.3 309" stroke="#4a3c2e" stroke-width="1.2" opacity="0.44"/>
<path d="M391.4 192.4 C333.5 181.6 267.1 223.5 264.4 306.9" stroke="#584838" stroke-width="1.5" opacity="0.54"/>
<path d="M390.4 194.2 C334.2 181.2 268.6 222.1 263.8 309.4" stroke="#88765e" stroke-width="0.8" opacity="0.35"/>
<path d="M389 194.1 C334 185.7 270.6 223.7 263.3 309.4" stroke="#645444" stroke-width="0.8" opacity="0.31"/>
<path d="M388.8 194.3 C335.4 184.7 270.7 223 265.2 306.9" stroke="#7e6c56" stroke-width="0.6" opacity="0.26"/>
<path d="M389.2 195.9 C335.2 187.3 271.2 225.6 265.5 307.7" stroke="#4e4032" stroke-width="1.2" opacity="0.42"/>
<path d="M390.4 195.4 C336.3 188.4 271.5 225.5 265.2 308" stroke="#9e8c72" stroke-width="1.3" opacity="0.45"/>
<path d="M388.5 198.2 C336.5 190.3 274 227.3 263.6 306.6" stroke="#96846c" stroke-width="0.9" opacity="0.29"/>
<path d="M390.2 198.9 C336.2 191.5 273.5 226.2 265.9 308.7" stroke="#9e8c72" stroke-width="1.4" opacity="0.28"/>
<path d="M390.7 199 C336.9 192.8 273.2 229 264.4 308.4" stroke="#645444" stroke-width="1" opacity="0.38"/>
<path d="M390.6 200.6 C336.5 193.3 273.5 227.9 264.6 308.7" stroke="#645444" stroke-width="1.2" opacity="0.30"/>
<path d="M390 202 C335.2 193.3 275.6 230.4 264.9 307.9" stroke="#4a3c2e" stroke-width="1.5" opacity="0.44"/>
<path d="M388.8 201.2 C335.9 193.9 276.3 231.9 267.2 307.7" stroke="#584838" stroke-width="0.7" opacity="0.28"/>
<path d="M389.3 202 C337.1 197.3 276.7 230.3 265.5 308" stroke="#a8977c" stroke-width="1" opacity="0.31"/>
<path d="M390.5 203.1 C337.7 198.1 278 231.3 265.7 307.5" stroke="#4e4032" stroke-width="1.4" opacity="0.29"/>
<path d="M390.6 205.3 C336.6 199.2 278.8 234.7 266.6 307.6" stroke="#4a3c2e" stroke-width="1.3" opacity="0.55"/>
<path d="M388.7 204.9 C337.7 199 280.8 233.3 265.8 308.8" stroke="#4a3c2e" stroke-width="1.4" opacity="0.53"/>
<path d="M391.2 206.8 C337.8 202.3 279.1 235.2 266.5 308.8" stroke="#96846c" stroke-width="1.4" opacity="0.42"/>
<path d="M390.2 205.5 C337.6 202.6 280.8 236.2 267.3 307.7" stroke="#5e4e3e" stroke-width="0.9" opacity="0.45"/>
<path d="M389 205.9 C337.1 205 281.9 235 268.2 309.5" stroke="#645444" stroke-width="1" opacity="0.44"/>
<path d="M389 207.7 C337.6 204.5 283.5 235.6 265.7 309.1" stroke="#5e4e3e" stroke-width="1" opacity="0.43"/>
<path d="M389.5 207.1 C337.7 207.6 282.3 237.4 267.7 309.1" stroke="#584838" stroke-width="0.7" opacity="0.56"/>
<path d="M388.4 168.5 C432 186 454 238.3 445 302.7" stroke="#a8977c" stroke-width="1.4" opacity="0.42"/>
<path d="M389.3 171 C432.2 185.7 452 240.7 444.2 300.9" stroke="#4a3c2e" stroke-width="1.4" opacity="0.50"/>
<path d="M388.9 171.9 C431.3 186.1 451.9 240.2 445.9 302.5" stroke="#645444" stroke-width="1.4" opacity="0.47"/>
<path d="M388 174.1 C429.4 187.9 451.7 240.7 443.7 303" stroke="#4e4032" stroke-width="0.6" opacity="0.36"/>
<path d="M389.6 175.1 C431.1 189.4 448.9 241.5 445.5 302.9" stroke="#645444" stroke-width="0.6" opacity="0.32"/>
<path d="M388.8 175.4 C428.3 190.8 448.3 243.2 444.3 303" stroke="#584838" stroke-width="1.1" opacity="0.32"/>
<path d="M389.2 178 C427.6 193.5 447.5 244.9 442.7 301.6" stroke="#645444" stroke-width="0.7" opacity="0.47"/>
<path d="M389.7 179.2 C429.2 191.6 447.8 245.7 441.9 301.1" stroke="#88765e" stroke-width="0.7" opacity="0.27"/>
<path d="M388.2 181.1 C428.9 194.2 448.7 246.1 442.6 301.6" stroke="#9e8c72" stroke-width="1.2" opacity="0.26"/>
<path d="M388.3 181.8 C426.2 194.2 444.6 245.3 442.2 304" stroke="#4a3c2e" stroke-width="1" opacity="0.52"/>
<path d="M389.5 182.7 C427.2 194.8 446.2 245.5 442.6 302.6" stroke="#4e4032" stroke-width="0.9" opacity="0.56"/>
<path d="M388.5 185.1 C426.7 195.4 443.7 245.6 443.6 302" stroke="#5e4e3e" stroke-width="1.3" opacity="0.37"/>
<path d="M390.2 186.3 C424.4 198.7 443.7 247.1 440.5 303.6" stroke="#96846c" stroke-width="1.4" opacity="0.27"/>
<path d="M387.8 188.9 C424 200.6 444 250.1 442.5 301.9" stroke="#a8977c" stroke-width="0.7" opacity="0.53"/>
<path d="M390 190.4 C423.9 200.3 441.9 249.1 442.1 301.8" stroke="#584838" stroke-width="0.9" opacity="0.31"/>
<path d="M389.6 190.5 C423.2 200.5 441.8 248.8 439.8 303.5" stroke="#584838" stroke-width="0.7" opacity="0.42"/>
<path d="M389.1 191.6 C422 203.3 441.6 251.7 441.8 303.7" stroke="#4a3c2e" stroke-width="1.2" opacity="0.35"/>
<path d="M388.6 192.5 C421.2 203.4 439.7 250.5 439.9 304.5" stroke="#584838" stroke-width="0.9" opacity="0.39"/>
<path d="M389.4 195 C421.8 206 440.9 251.3 440.1 304.3" stroke="#645444" stroke-width="1.3" opacity="0.26"/>
<path d="M388.3 195.3 C422.1 206.1 440.5 252.4 441.1 303.3" stroke="#4a3c2e" stroke-width="1.2" opacity="0.48"/>
<path d="M389.9 197.9 C419.8 205.2 438.3 251.9 441.3 302.1" stroke="#96846c" stroke-width="1.3" opacity="0.54"/>
<path d="M389.3 199.5 C419.4 207.3 436.1 254.5 439.3 303.3" stroke="#5e4e3e" stroke-width="1.1" opacity="0.30"/>
<path d="M390.1 200.6 C417.9 210.9 437.5 254.8 437.8 304.4" stroke="#584838" stroke-width="0.9" opacity="0.26"/>
<path d="M390.7 203.1 C417.5 210.5 437.4 255.7 437.8 302.6" stroke="#5e4e3e" stroke-width="0.9" opacity="0.56"/>
<path d="M388.8 202.3 C417.6 211.9 436.8 255.2 439 303.4" stroke="#9e8c72" stroke-width="0.7" opacity="0.37"/>
<path d="M388.9 203.4 C416.6 213 436 257.8 437.8 304.9" stroke="#584838" stroke-width="1.4" opacity="0.42"/>
<path d="M391.2 205.7 C417.6 213.6 435.5 256.5 439 303.1" stroke="#5e4e3e" stroke-width="1.1" opacity="0.32"/>
<path d="M390.3 206.7 C416.8 213.8 433.1 257.5 439.2 305" stroke="#584838" stroke-width="0.6" opacity="0.45"/>
        </g>
        <path d="M386.500 190 C387 196 387.300 201 387.500 207" stroke="#b8aa96" stroke-width="1.500" fill="none" filter="url(#f07)" opacity="0.700"/><path d="M400 190 C410 194 418 200 424 208" stroke="#a39a8c" stroke-width="3" fill="none" filter="url(#f2)" opacity="0.700"/>
      </g>
      </g>
      <!-- hand + forearm -->
      <g clip-path="url(#cbody)"><path d="M414 476 C411 494 402 512 382 530 C372 538 361 545 353 550 L352 562" stroke="#d5a389" stroke-width="4" fill="none" filter="url(#f1)" opacity="0.900"/><path d="M416 480 C412 500 400 518 384 533 C374 541 362 549 354 555 L353 590" stroke="#e6c2ac" stroke-width="9" fill="none" filter="url(#f4)" opacity="0.800"/></g>
      <use href="#phand" fill="url(#handg)"/>
      <g clip-path="url(#chand)">
        <path d="M353 549 C380 533 401 516 412 490" stroke="#dfb39b" stroke-width="5" fill="none" filter="url(#f2)"/>
        <path d="M432 395 C429 420 425 445 415 475" stroke="#dfb6a0" stroke-width="5" fill="none" filter="url(#f2)"/>
        <path d="M429 402 C426 425 421 445 414 462" stroke="#deb8a4" stroke-width="2" fill="none" filter="url(#f1)"/>
        <path d="M408 413 C403 432 395 450 386 467" stroke="#ddb8a6" stroke-width="2.200" fill="none" filter="url(#f1)"/>
        <path d="M419 392 C412 410 404 428 396 444" stroke="#fbf0e8" stroke-width="5" fill="none" filter="url(#f2)"/>
        <path d="M400 410 C393 425 384 440 372 455" stroke="#fcf2ea" stroke-width="5" fill="none" filter="url(#f2)"/>
        <ellipse cx="338" cy="494" rx="24" ry="13" fill="#fcf2ec" filter="url(#f4)" transform="rotate(-40 338 494)"/>
        <ellipse cx="385" cy="492" rx="14" ry="9" fill="#f2d8c8" filter="url(#f4)" transform="rotate(-40 385 492)" opacity="0.700"/>
        <path d="M301 529 C310 523 325 523 336 527" stroke="#edccba" stroke-width="1.500" fill="none" filter="url(#f1)"/>
        <path d="M351 550 L351 630" stroke="#e6bfaa" stroke-width="5" fill="none" filter="url(#f2)"/>
        <path d="M299 530 L291 630" stroke="#eccab8" stroke-width="4" fill="none" filter="url(#f2)"/>
        <ellipse cx="320" cy="585" rx="10" ry="40" fill="#faeadf" filter="url(#f4)"/>
        <path d="M424 389 C427 388 430 390 430.500 393 C430.500 396.500 429 399.500 427 401.500 C424.500 400.500 423 398 422.500 395 C422.500 392.500 423 390 424 389Z" fill="#edd6d0" filter="url(#f05)"/>
        <path d="M401.500 405 C404 404 406.500 405.500 407 408.500 C406.500 411.500 405.500 413.500 404 415 C401.500 414 400 412 400 409.500 C400 407.500 400.500 406 401.500 405Z" fill="#edd6d0" filter="url(#f05)"/>
      </g>
    </g>
  </defs>
  <use href="#portrait"/>
</svg>
<!-- ===== right: collapsed icon column ===== -->
<svg style="left:726px;top:62px" width="274" height="619" viewBox="726 62 274 619">
  <defs>
    <linearGradient id="ig2" x1="0" y1="0" x2="0" y2="1"><stop offset="0" stop-color="#dcdcdc"/><stop offset="1" stop-color="#9a9a9a"/></linearGradient>
  </defs>
  <!-- header arrows -->
  <path d="M757.500 64 l-3.500 3 l3.500 3z M761 64 l-3.500 3 l3.500 3z" fill="#d4d4d4"/>
  <path d="M989 64 l3.500 3 l-3.500 3z M992.500 64 l3.500 3 l-3.500 3z" fill="#bdbdbd"/>
  <!-- icon column separators -->
  <rect x="728" y="140" width="36" height="1" fill="#3c3c3c"/><rect x="728" y="141" width="36" height="1" fill="#5e5e5e"/>
  <rect x="728" y="206" width="36" height="1" fill="#3c3c3c"/><rect x="728" y="207" width="36" height="1" fill="#5e5e5e"/>
  <!-- grips -->
  <g fill="#3a3a3a">
    <rect x="737" y="77" width="1" height="3"/><rect x="739" y="77" width="1" height="3"/><rect x="741" y="77" width="1" height="3"/><rect x="743" y="77" width="1" height="3"/><rect x="745" y="77" width="1" height="3"/><rect x="747" y="77" width="1" height="3"/><rect x="749" y="77" width="1" height="3"/><rect x="751" y="77" width="1" height="3"/><rect x="753" y="77" width="1" height="3"/><rect x="755" y="77" width="1" height="3"/>
    <rect x="737" y="145" width="1" height="3"/><rect x="739" y="145" width="1" height="3"/><rect x="741" y="145" width="1" height="3"/><rect x="743" y="145" width="1" height="3"/><rect x="745" y="145" width="1" height="3"/><rect x="747" y="145" width="1" height="3"/><rect x="749" y="145" width="1" height="3"/><rect x="751" y="145" width="1" height="3"/><rect x="753" y="145" width="1" height="3"/><rect x="755" y="145" width="1" height="3"/>
  </g>
  <!-- history icon -->
  <rect x="741.500" y="88.500" width="4" height="4" fill="#777" stroke="#cfcfcf" stroke-width="1"/>
  <rect x="741.500" y="94.500" width="4" height="4" fill="#777" stroke="#cfcfcf" stroke-width="1"/>
  <rect x="741" y="100" width="5" height="5" fill="#b8b8b8"/>
  <path d="M748.500 91.800 L755.800 88.300 L755.300 95.500 L753.600 93.800 C754.800 97.500 753.500 101 750 103.500 C751.800 100.500 752.300 97.500 751.300 94.300 Z" fill="url(#ig2)"/>
  <!-- actions play -->
  <path d="M740 117 L755.500 123.500 L740 130z" fill="url(#ig2)"/>
  <!-- brush presets -->
  <path d="M743 164 h8 v9 h-8z" fill="#bdbdbd"/>
  <path d="M744.500 163.500 l-2.500 -6 M747 163 v-7.500 M749.500 163.500 l3.500 -6.500" stroke="#c8c8c8" stroke-width="1.400" fill="none"/>
  <ellipse cx="741.800" cy="156.500" rx="1.600" ry="2.300" fill="#d6d6d6"/><ellipse cx="747" cy="155" rx="1.500" ry="2.200" fill="#d6d6d6"/><ellipse cx="753.200" cy="156.500" rx="1.700" ry="2.200" fill="#d6d6d6"/>
  <!-- brush -->
  <path d="M744 187.500 h12.500" stroke="#c4c4c4" stroke-width="1.600"/><path d="M745.500 185 c-3 -1 -5.500 0 -7 2.500 c1.500 2 4 3 7 2z" fill="#d0d0d0"/>
  <path d="M738.500 195.500 h10" stroke="#c4c4c4" stroke-width="1.600"/><path d="M748 193.500 l8 -2.500 v9 l-8 -2.500z" fill="#d0d0d0"/>
</svg>
<!-- ===== color panel ===== -->
<div class="a ptabs" style="top:73px;height:18px"></div>
<div class="a ptab on" style="left:767px;top:73px;width:37px"><span>颜色</span></div>
<div class="a ptab" style="left:804px;top:73px;width:37px"><span>色板</span></div>
<div class="a" style="left:771px;top:100px;width:22px;height:21px;background:#474747;border:1px solid #6a6a6a"></div>
<div class="a" style="left:782px;top:110px;width:20px;height:20px;background:#fff;border:1px solid #484848"></div>
<div class="a" style="left:773px;top:102px;width:18px;height:17px;background:#000;border:1px solid #e6e6e6"></div>
<div class="t" style="left:809px;top:101px;font-weight:bold;font-size:11px;color:#e4e4e4">R</div>
<div class="t" style="left:809px;top:125px;font-weight:bold;font-size:11px;color:#e4e4e4">G</div>
<div class="t" style="left:809px;top:149px;font-weight:bold;font-size:11px;color:#e4e4e4">B</div>
<div class="a" style="left:825px;top:103px;width:79px;height:6px;border:1px solid #8a8a8a;background:linear-gradient(90deg,#000,#f00)"></div>
<div class="a" style="left:825px;top:127px;width:79px;height:6px;border:1px solid #8a8a8a;background:linear-gradient(90deg,#000,#0f0)"></div>
<div class="a" style="left:825px;top:152px;width:79px;height:6px;border:1px solid #8a8a8a;background:linear-gradient(90deg,#000,#00f)"></div>
<div class="a inp" style="left:909px;top:100px;width:51px;height:20px"></div>
<div class="a inp" style="left:909px;top:125px;width:51px;height:20px"></div>
<div class="a inp" style="left:909px;top:149px;width:51px;height:20px"></div>
<div class="t" style="left:912px;top:102px;color:#f0f0f0">0</div>
<div class="t" style="left:912px;top:126px;color:#f0f0f0">0</div>
<div class="t" style="left:912px;top:151px;color:#f0f0f0">0</div>
<div class="a" style="left:774px;top:180px;width:187px;height:14px;background:linear-gradient(rgba(255,255,255,1),rgba(255,255,255,.75) 18%,rgba(255,255,255,0) 52%,rgba(0,0,0,0) 55%,rgba(0,0,0,.9)),linear-gradient(90deg,#ee1018,#f4e410 17%,#109238 31%,#10a8ea 48%,#1c1a84 62%,#b21090 75%,#ea1052 90%,#e41020)"></div>
<div class="a" style="left:960px;top:180px;width:8px;height:7px;background:#fff"></div>
<div class="a" style="left:960px;top:187px;width:8px;height:7px;background:#000"></div>
<svg style="left:768px;top:73px" width="232" height="130" viewBox="768 73 232 130">
  <defs><linearGradient id="th" x1="0" y1="0" x2="0" y2="1"><stop offset="0" stop-color="#c4c4c4"/><stop offset="1" stop-color="#7c7c7c"/></linearGradient></defs>
  <path d="M982 79 h6 l-3 3.500z" fill="#d8d8d8"/><path d="M988.500 77.500 h8 M988.500 79.500 h8 M988.500 81.500 h8 M988.500 83.500 h8" stroke="#d8d8d8" stroke-width="1"/>
  <path d="M825.500 109 l5 4.500 v3.800 h-10 v-3.800z" fill="url(#th)" stroke="#444" stroke-width="0.800"/>
  <path d="M825.500 133.300 l5 4.500 v3.800 h-10 v-3.800z" fill="url(#th)" stroke="#444" stroke-width="0.800"/>
  <path d="M825.500 157.800 l5 4.500 v3.800 h-10 v-3.800z" fill="url(#th)" stroke="#444" stroke-width="0.800"/>
</svg>
<div class="a" style="left:767px;top:198px;width:233px;height:4px;background:#383838"></div>
<!-- ===== styles panel ===== -->
<div class="a ptabs" style="top:202px;height:18px;border-bottom:1px solid #5f5f5f"></div>
<div class="a ptab" style="left:767px;top:202px;width:37px;height:17px"><span>调整</span></div>
<div class="a ptab on" style="left:804px;top:202px;width:37px"><span>样式</span></div>
<div class="a" style="left:767px;top:220px;width:218px;height:98px;background:#4a4a4a"></div>
<div class="a" style="left:767px;top:220px;width:3px;height:98px;background:#555;background-image:linear-gradient(#3e3e3e 1px,transparent 1px);background-size:31px 31px;background-position:0 31px"></div>
<div class="a" style="left:769px;top:220px;width:186px;height:98px;background:#555;background-image:linear-gradient(90deg,#3e3e3e 1px,transparent 1px),linear-gradient(#3e3e3e 1px,transparent 1px);background-size:31px 31px,31px 31px;background-position:30px 0,0 31px"></div>
<div class="a" style="left:767px;top:220px;width:32px;height:31px;background:#3d3d3d"></div>
<div class="a" style="left:985px;top:220px;width:15px;height:98px;background:linear-gradient(90deg,#3c3c3c,#4c4c4c)"></div>
<div class="a" style="left:986px;top:238px;width:12px;height:30px;border-radius:4px;background:linear-gradient(90deg,#6a6a6a,#808080)"></div>
<div class="a" style="left:767px;top:318px;width:233px;height:1px;background:#686868"></div>
<div class="a" style="left:767px;top:319px;width:233px;height:17px;background:#535353"></div>
<div class="a" style="left:767px;top:336px;width:233px;height:3px;background:#383838"></div>
<svg style="left:768px;top:202px" width="232" height="137" viewBox="768 202 232 137">
  <defs>
    <radialGradient id="s2"><stop offset="0" stop-color="#ffe800"/><stop offset="0.450" stop-color="#ff8a00"/><stop offset="1" stop-color="#f01000"/></radialGradient>
    <radialGradient id="s4" cx="0.500" cy="0.550"><stop offset="0" stop-color="#666"/><stop offset="0.250" stop-color="#111"/><stop offset="0.400" stop-color="#5a5a5a"/><stop offset="0.550" stop-color="#111"/><stop offset="0.750" stop-color="#444"/><stop offset="1" stop-color="#1a1a1a"/></radialGradient>
    <linearGradient id="s5" x1="0" y1="0" x2="0" y2="1"><stop offset="0" stop-color="#9ccdf5"/><stop offset="0.400" stop-color="#2d8be0"/><stop offset="1" stop-color="#3a72b8"/></linearGradient>
    <linearGradient id="s7" x1="0" y1="0" x2="0" y2="1"><stop offset="0" stop-color="#444"/><stop offset="0.600" stop-color="#7a7a7a"/><stop offset="1" stop-color="#d0d0d0"/></linearGradient>
    <linearGradient id="s9" x1="0" y1="0" x2="0" y2="1"><stop offset="0" stop-color="#6b5220"/><stop offset="1" stop-color="#8c7c56"/></linearGradient>
    <linearGradient id="s10" x1="0" y1="0" x2="0" y2="1"><stop offset="0" stop-color="#f0a090"/><stop offset="0.150" stop-color="#e81030"/><stop offset="0.400" stop-color="#e0103a"/><stop offset="0.500" stop-color="#c8a040"/><stop offset="0.580" stop-color="#6a50a0"/><stop offset="0.680" stop-color="#f01050"/><stop offset="0.900" stop-color="#e01030"/><stop offset="1" stop-color="#700818"/></linearGradient>
    <linearGradient id="s13" x1="0" y1="0" x2="0.300" y2="1"><stop offset="0" stop-color="#9c6a50"/><stop offset="0.450" stop-color="#e06a50"/><stop offset="0.700" stop-color="#e0a040"/><stop offset="1" stop-color="#6a8a30"/></linearGradient>
    <linearGradient id="s14" x1="0" y1="0" x2="0" y2="1"><stop offset="0" stop-color="#78b4ee"/><stop offset="1" stop-color="#a8c8f4"/></linearGradient>
    <linearGradient id="s15" x1="0" y1="0" x2="0" y2="1"><stop offset="0" stop-color="#4aa0f0"/><stop offset="0.450" stop-color="#e8f4ff"/><stop offset="0.600" stop-color="#5a4010"/><stop offset="0.800" stop-color="#c87810"/><stop offset="1" stop-color="#e08a10"/></linearGradient>
    <linearGradient id="s17" x1="0" y1="0" x2="0" y2="1"><stop offset="0" stop-color="#d8a0d8"/><stop offset="0.250" stop-color="#a050c0"/><stop offset="0.450" stop-color="#5068c0"/><stop offset="0.650" stop-color="#4a70b8"/><stop offset="0.850" stop-color="#9050b8"/><stop offset="1" stop-color="#c080d0"/></linearGradient>
    <filter id="b1" x="-50%" y="-50%" width="200%" height="200%"><feGaussianBlur stdDeviation="0.800"/></filter>
    <filter id="nz" x="0" y="0" width="100%" height="100%"><feTurbulence type="fractalNoise" baseFrequency="0.900" numOctaves="2" seed="4"/><feColorMatrix type="matrix" values="0 0 0 0 1  0 0 0 0 1  0 0 0 0 1  3 3 0 0 -2.300"/><feComposite operator="in" in2="SourceGraphic"/></filter>
  </defs>
  <!-- panel menu -->
  <path d="M982 208.500 h6 l-3 3.500z" fill="#d8d8d8"/><path d="M988.500 206.500 h8 M988.500 208.500 h8 M988.500 210.500 h8 M988.500 212.500 h8" stroke="#d8d8d8" stroke-width="1"/>
  <!-- row 1 -->
  <rect x="775" y="228" width="15" height="15" fill="#fff" stroke="#111" stroke-width="1"/>
  <path d="M772.500 226 L792.500 245.500" stroke="#e8101c" stroke-width="1.700"/>
  <rect x="806.500" y="229" width="16" height="16" rx="1" fill="#000" opacity="0.550" filter="url(#b1)"/>
  <rect x="806" y="228" width="15.500" height="15.500" rx="1" fill="#1a0000"/>
  <rect x="807" y="229" width="13.500" height="13.500" fill="url(#s2)"/>
  <rect x="833.500" y="224" width="23" height="23" rx="4" fill="none" stroke="#d9d6ac" stroke-width="1.300"/>
  <rect x="836" y="226.500" width="18" height="18" rx="2" fill="#575757" stroke="#d9d6ac" stroke-width="1.300"/>
  <rect x="870" y="229.500" width="15.500" height="15.500" rx="2" fill="#000" opacity="0.500" filter="url(#b1)"/>
  <rect x="869" y="228" width="15.500" height="15.500" rx="2.500" fill="url(#s4)"/>
  <path d="M870 231 c3 -2.500 8 -3 13 -1.500" stroke="#e8e8e8" stroke-width="1.500" fill="none" opacity="0.800" filter="url(#b1)"/>
  <rect x="900" y="228" width="15" height="15" fill="url(#s5)"/>
  <path d="M900.500 228.500 h12 l-4 6 h-5z" fill="#fff" opacity="0.700" filter="url(#b1)"/>
  <rect x="931.500" y="228" width="15" height="15" fill="#a9a9a9" stroke="#b8b8b8" stroke-width="0.500"/>
  <!-- row 2 -->
  <rect x="775" y="259.500" width="15" height="15" fill="url(#s7)"/>
  <path d="M775 259.500 l4 4 v7 l-4 4z" fill="#3a3a3a" opacity="0.600"/><path d="M790 259.500 l-4 4 v7 l4 4z" fill="#bdbdbd" opacity="0.600"/>
  <rect x="806" y="259.500" width="15" height="15" fill="#6c5d3c"/>
  <rect x="837.500" y="259.500" width="15" height="15" fill="url(#s9)"/>
  <rect x="869" y="259.500" width="15" height="15" fill="url(#s10)"/>
  <g>
    <rect x="900" y="259.500" width="15" height="15" fill="#101010"/>
    <path d="M900 262 c4 -3 8 2 15 -2 v4 c-6 3 -10 -1 -15 3z" fill="#20c8c0"/>
    <path d="M905 259.500 h7 l3 2 c-4 2 -7 1 -10 -2z" fill="#e04040"/>
    <path d="M908 264 c3 -1 5 0 7 1 v3 c-3 -1 -5 -1 -7 -4z" fill="#2030c0"/>
    <path d="M900 271 c4 -5 9 -5 15 -2 v5.500 h-15z" fill="#e8d840"/>
    <path d="M903 274.500 c2 -3 5 -3 7 0z" fill="#101010"/>
  </g>
  <rect x="931.500" y="259.500" width="15" height="15" fill="#ffe000"/>
  <rect x="934.500" y="262.500" width="9" height="9" fill="#a09010"/>
  <path d="M931.500 274.500 h15 l-3 -3 h-9z" fill="#d8a800"/>
  <!-- row 3 -->
  <rect x="775" y="291" width="15" height="15" fill="url(#s13)"/>
  <rect x="806" y="291" width="15" height="15" fill="#d4e6fa"/>
  <rect x="807.500" y="292.500" width="12" height="11.500" fill="url(#s14)"/>
  <path d="M806 306 h15 l-1.500 -2 h-12z" fill="#a0a0e8"/>
  <rect x="838.500" y="292" width="15" height="15" fill="#102040" opacity="0.500" filter="url(#b1)"/>
  <rect x="837.500" y="291" width="15" height="15" fill="url(#s15)"/>
  <rect x="869" y="291" width="15" height="15" fill="#8a8a8a"/>
  <rect x="869" y="291" width="15" height="15" fill="#fff" filter="url(#nz)"/>
  <rect x="902" y="293.500" width="15.500" height="15.500" fill="#000" opacity="0.800" filter="url(#b1)"/>
  <rect x="900" y="291" width="15" height="14.500" fill="url(#s17)"/>
  <rect x="932.500" y="292.500" width="15" height="15" fill="#222" opacity="0.800"/>
  <rect x="931.500" y="291.500" width="15" height="15" fill="#595959"/>
  <!-- scrollbar arrows -->
  <path d="M989 230.500 l3 -3 l3 3z" fill="#e6e6e6"/><path d="M989 310 l3 3 l3 -3z" fill="#e6e6e6"/>
  <!-- bottom icons -->
  <circle cx="907.500" cy="327.800" r="4.800" fill="none" stroke="#888" stroke-width="1.300"/><path d="M904.200 324.500 L910.800 331" stroke="#888" stroke-width="1.300"/>
  <path d="M933.500 323.500 h9.500 v9.500 h-5 v-4.500 h-4.500z" fill="#909090"/><path d="M933.500 329.500 h3.500 v3.500z" fill="#909090"/>
  <path d="M961.500 325.500 h10 M964.500 325 v-2 h4 v2 M962.500 327 h8 v6 h-8z M964.500 327.500 v5 M966.500 327.500 v5 M968.500 327.500 v5" stroke="#868686" stroke-width="1" fill="none"/>
  <g fill="#6c6c6c"><rect x="997" y="326" width="1" height="1"/><rect x="995" y="328" width="1" height="1"/><rect x="997" y="328" width="1" height="1"/><rect x="993" y="330" width="1" height="1"/><rect x="995" y="330" width="1" height="1"/><rect x="997" y="330" width="1" height="1"/><rect x="991" y="332" width="1" height="1"/><rect x="993" y="332" width="1" height="1"/><rect x="995" y="332" width="1" height="1"/><rect x="997" y="332" width="1" height="1"/><rect x="989" y="334" width="1" height="1"/><rect x="991" y="334" width="1" height="1"/><rect x="993" y="334" width="1" height="1"/><rect x="995" y="334" width="1" height="1"/><rect x="997" y="334" width="1" height="1"/></g>
</svg>
<!-- ===== layers panel ===== -->
<div class="a ptabs" style="top:339px;height:17px;border-bottom:none"></div>
<div class="a ptab on" style="left:767px;top:339px;width:37px;height:17px"><span>图层</span></div>
<div class="a ptab" style="left:804px;top:339px;width:37px;height:16px"><span>通道</span></div>
<div class="a ptab" style="left:841px;top:339px;width:37px;height:16px"><span>路径</span></div>
<div class="a" style="left:767px;top:355px;width:233px;height:85px;background:#535353"></div>
<div class="a" style="left:767px;top:382px;width:233px;height:2px;background:linear-gradient(#3e3e3e 50%,#5d5d5d 50%)"></div>
<div class="a" style="left:767px;top:408px;width:233px;height:2px;background:linear-gradient(#3e3e3e 50%,#5d5d5d 50%)"></div>
<div class="a" style="left:767px;top:438px;width:233px;height:2px;background:#3c3c3c"></div>
<div class="a dd" style="left:772px;top:359px;width:68px;height:20px;background:linear-gradient(#5c5c5c,#4f4f4f);border-color:#3a3a3a"></div>
<div class="t" style="left:793px;top:361px;color:#cfcfcf;letter-spacing:-0.5px">类型</div>
<div class="a dd" style="left:772px;top:387px;width:108px;height:19px;background:linear-gradient(#5c5c5c,#4f4f4f);border-color:#3a3a3a"></div>
<div class="t" style="left:780px;top:388px;color:#d4d4d4;letter-spacing:-0.5px">正常</div>
<div class="t" style="left:887px;top:388px;color:#cfcfcf;letter-spacing:-0.600px">不透明度:</div>
<div class="a" style="left:943px;top:387px;width:53px;height:19px;border:1px solid #3f3f3f;border-radius:3px;background:linear-gradient(90deg,#464646 33px,#3c3c3c 33px,#3c3c3c 34px,transparent 34px),linear-gradient(#616161,#515151)"></div>
<div class="t" style="left:945px;top:389px;color:#dad6ba;letter-spacing:-0.300px">100%</div>
<div class="t" style="left:774px;top:414px;color:#c4c4c4">锁定:</div>
<div class="t" style="left:911px;top:414px;color:#cfcfcf">填充:</div>
<div class="a" style="left:943px;top:415px;width:53px;height:19px;border:1px solid #3f3f3f;border-radius:3px;background:linear-gradient(90deg,#464646 33px,#3c3c3c 33px,#3c3c3c 34px,transparent 34px),linear-gradient(#616161,#515151)"></div>
<div class="t" style="left:945px;top:417px;color:#dad6ba;letter-spacing:-0.300px">100%</div>
<!-- layer row -->
<div class="a" style="left:767px;top:440px;width:31px;height:38px;background:#4b4b4b;border-right:1px solid #3f3f3f"></div>
<div class="a" style="left:798px;top:440px;width:187px;height:38px;background:#56647a"></div>
<div class="a" style="left:985px;top:440px;width:15px;height:241px;background:#404040"></div>
<div class="a" style="left:767px;top:478px;width:218px;height:203px;background:#464646;border-top:1px solid #3a3a3a"></div>
<div class="a" style="left:800px;top:442px;width:26px;height:32px;background:#fff;border:1px solid #151515;overflow:hidden" id="thumb">
  <svg style="left:0;top:0" width="24" height="30" viewBox="192 156 364 473" preserveAspectRatio="none"><use href="#portrait"/></svg>
</div>
<div class="t" style="left:837px;top:451px;color:#fff;font-style:italic;letter-spacing:-0.500px">背景</div>
<svg style="left:768px;top:339px" width="232" height="342" viewBox="768 339 232 342">
  <defs><linearGradient id="ig3" x1="0" y1="0" x2="0" y2="1"><stop offset="0" stop-color="#a0a0a0"/><stop offset="1" stop-color="#808080"/></linearGradient></defs>
  <path d="M982 345.500 h6 l-3 3.500z" fill="#d8d8d8"/><path d="M988.500 343.500 h8 M988.500 345.500 h8 M988.500 347.500 h8 M988.500 349.500 h8" stroke="#d8d8d8" stroke-width="1"/>
  <!-- search icon -->
  <circle cx="784" cy="368" r="2.800" fill="none" stroke="#9a9a9a" stroke-width="1.300"/><path d="M782 370.200 L778.500 373.500" stroke="#9a9a9a" stroke-width="1.500"/>
  <path d="M830 367.500 h5 l-2.500 -3z M830 370 h5 l-2.500 3z" fill="#c4c4c4"/>
  <!-- filter icons -->
  <rect x="859.500" y="364" width="12" height="9.500" fill="none" stroke="#8e8e8e" stroke-width="1"/>
  <path d="M861 372 l3 -4 l2 2.500 l1.500 -1.500 l2.500 3z" fill="#8e8e8e"/><rect x="868" y="365.500" width="1.500" height="1.500" fill="#8e8e8e"/>
  <circle cx="888.500" cy="368.500" r="4.800" fill="#6a6a6a" stroke="#8e8e8e" stroke-width="1.200"/><path d="M885.200 371.800 a4.800 4.800 0 0 1 6.600 -6.600z" fill="#9a9a9a"/>
  <text x="912.200" y="373.600" text-anchor="middle" font-family="'Liberation Serif',serif" font-size="15" fill="#9a9a9a">T</text>
  <rect x="932" y="365" width="8.500" height="8" fill="none" stroke="#8e8e8e" stroke-width="1.200"/>
  <g fill="#535353" stroke="#8e8e8e" stroke-width="0.900"><circle cx="932" cy="365" r="1.400"/><circle cx="940.500" cy="365" r="1.400"/><circle cx="932" cy="373" r="1.400"/><circle cx="940.500" cy="373" r="1.400"/></g>
  <path d="M958.500 363 h4 l2.500 2.500 v8 h-6.500z" fill="none" stroke="#8e8e8e" stroke-width="1"/><rect x="954" y="368" width="6" height="6.500" fill="#8e8e8e"/>
  <rect x="987.500" y="361.500" width="8.500" height="15.500" fill="#444" stroke="#484848"/><rect x="988" y="362" width="7.500" height="6.500" fill="#5e5e5e"/>
  <path d="M870 396.500 h5 l-2.500 -3z M870 398.500 h5 l-2.500 3z" fill="#c4c4c4"/>
  <path d="M983 396 h6 l-3 3z" fill="#d8d8d8"/><path d="M983 424 h6 l-3 3z" fill="#d8d8d8"/>
  <!-- lock icons -->
  <rect x="810" y="419" width="11" height="11" fill="#8e8e8e"/>
  <g fill="#686868"><rect x="810" y="419" width="3.700" height="3.700"/><rect x="817.300" y="419" width="3.700" height="3.700"/><rect x="813.700" y="422.700" width="3.600" height="3.600"/><rect x="810" y="426.300" width="3.700" height="3.700"/><rect x="817.300" y="426.300" width="3.700" height="3.700"/></g>
  <path d="M845.500 417 L838.500 425" stroke="#8c8c8c" stroke-width="1.800" stroke-linecap="round"/><path d="M830 429.500 c3 0 4 -3 6.500 -4 c1.500 0.500 2.200 1.500 2 3 c-1.500 2 -5.500 2.500 -8.500 1z" fill="#8c8c8c"/>
  <path d="M858.500 417 l2.500 2.800 h-1.800 v3 h3 v-1.800 l2.800 2.500 l-2.800 2.500 v-1.800 h-3 v3 h1.800 l-2.500 2.800 l-2.500 -2.800 h1.800 v-3 h-3 v1.800 l-2.800 -2.500 l2.800 -2.500 v1.800 h3 v-3 h-1.800z" fill="#8a8a8a"/>
  <rect x="876" y="422.500" width="10" height="7.500" rx="1" fill="#909090"/><path d="M878 422.500 v-2 a3 3 0 0 1 6 0 v2" fill="none" stroke="#909090" stroke-width="1.500"/><rect x="880.300" y="425" width="1.400" height="2.500" fill="#4a4a4a"/>
  <!-- eye -->
  <path d="M776 457.800 c3 -5.500 9 -5.500 12 0 c-3 5.500 -9 5.500 -12 0z" fill="#d0d0d0"/><circle cx="782" cy="457.500" r="3" fill="#4a4a4a"/><circle cx="782" cy="457.500" r="1.600" fill="#2a2a2a"/><circle cx="783" cy="456.500" r="0.800" fill="#ddd"/>
  <!-- layer lock -->
  <rect x="959.500" y="456.500" width="9" height="7" fill="#7a869a" stroke="#e6e6e6" stroke-width="1"/><path d="M961.500 456 v-2 a2.500 2.500 0 0 1 5 0 v2" fill="none" stroke="#e6e6e6" stroke-width="1.200"/><rect x="963.400" y="458.500" width="1.400" height="2.500" fill="#fff"/>
  <!-- small meter widget -->
  <rect x="991.500" y="648" width="10" height="35" rx="2" fill="#3a4152" stroke="#2c3038" stroke-width="1"/>
  <rect x="995" y="654" width="4" height="7" fill="#2e3446"/>
  <g><rect x="995" y="662" width="4" height="1.300" fill="#d8853c"/><rect x="995" y="664" width="4" height="1.300" fill="#d8903c"/><rect x="995" y="666" width="4" height="1.300" fill="#d8a03c"/><rect x="995" y="668" width="4" height="1.300" fill="#d8b03c"/><rect x="995" y="670" width="4" height="1.300" fill="#d8c03c"/><rect x="995" y="672" width="4" height="1.300" fill="#d8cc3c"/><rect x="995" y="674" width="4" height="1.300" fill="#d0d43c"/><rect x="995" y="676" width="4" height="1.300" fill="#b8d83c"/><rect x="995" y="678" width="4" height="1.300" fill="#a0d840"/><rect x="995" y="680" width="4" height="1.300" fill="#8cd848"/></g>
</svg>
</body></html>
